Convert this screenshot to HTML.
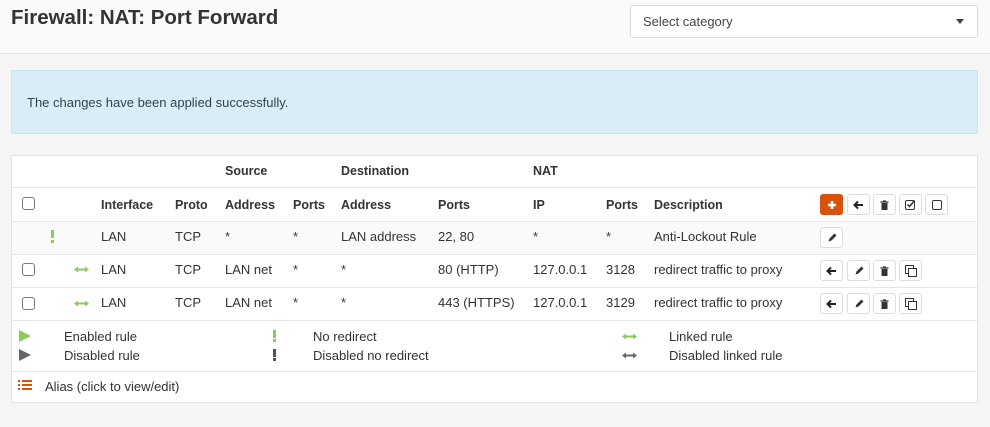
<!DOCTYPE html>
<html><head><meta charset="utf-8"><style>
*{margin:0;padding:0;box-sizing:border-box}
body{width:990px;height:427px;background:#f5f5f5;font-family:"Liberation Sans",sans-serif;font-size:13px;color:#333;position:relative;overflow:hidden}
.a{position:absolute;line-height:16px;white-space:nowrap}
.b{font-weight:bold;font-size:12.5px}
.cb{position:absolute;width:13px;height:13px;border:1px solid #777;border-radius:3px;background:#fff}
.btn{position:absolute;width:23px;height:21px;border:1px solid #ddd;border-radius:3px;background:#fff;display:flex;align-items:center;justify-content:center}
.hl{position:absolute;left:12px;width:966px;height:1px;background:#e6e6e6}
.ex{position:absolute;width:3px}
</style></head><body>
<div style="position:absolute;left:0;top:0;width:990px;height:54px;background:#fafafa;border-bottom:1px solid #e3e3e3"></div>
<div class="a" style="left:11px;top:6px;font-size:20.5px;line-height:24px;font-weight:bold;color:#333">Firewall: NAT: Port Forward</div>
<div style="position:absolute;left:630px;top:5px;width:348px;height:33px;background:#fff;border:1px solid #ddd;border-radius:3px"></div>
<div class="a" style="left:643px;top:14px;color:#444">Select category</div>
<div style="position:absolute;left:956px;top:19px;border-left:4px solid transparent;border-right:4px solid transparent;border-top:5px solid #444"></div>

<div style="position:absolute;left:11px;top:70px;width:967px;height:64px;background:#d9edf7;border:1px solid #bce8f1;border-radius:2px"></div>
<div class="a" style="left:27px;top:95px;color:#31444f">The changes have been applied successfully.</div>

<div style="position:absolute;left:11px;top:155px;width:967px;height:248px;background:#fff;border:1px solid #e3e3e3"></div>
<div style="position:absolute;left:12px;top:221px;width:965px;height:33px;background:#fafafa"></div>
<div class="hl" style="top:187px"></div>
<div class="hl" style="top:221px"></div>
<div class="hl" style="top:254px"></div>
<div class="hl" style="top:287px"></div>
<div class="hl" style="top:320px"></div>
<div class="hl" style="top:371px"></div>

<div class="a b" style="left:225px;top:163px">Source</div>
<div class="a b" style="left:341px;top:163px">Destination</div>
<div class="a b" style="left:533px;top:163px">NAT</div>

<div class="cb" style="left:22px;top:197px"></div>
<div class="a b" style="left:101px;top:197px">Interface</div>
<div class="a b" style="left:175px;top:197px">Proto</div>
<div class="a b" style="left:225px;top:197px">Address</div>
<div class="a b" style="left:293px;top:197px">Ports</div>
<div class="a b" style="left:341px;top:197px">Address</div>
<div class="a b" style="left:438px;top:197px">Ports</div>
<div class="a b" style="left:533px;top:197px">IP</div>
<div class="a b" style="left:606px;top:197px">Ports</div>
<div class="a b" style="left:654px;top:197px">Description</div>

<div class="btn" style="left:820px;top:194px;background:#d9520c;border-color:#d9520c"><svg width="10" height="10"><path d="M5 1v8M1 5h8" stroke="#fff" stroke-width="2.6"/></svg></div>
<div class="btn" style="left:847px;top:194px"><svg width="11" height="10"><path d="M10 5H2M5 1.5L1.5 5 5 8.5" stroke="#222" stroke-width="2" fill="none"/></svg></div>
<div class="btn" style="left:873px;top:194px"><svg width="9" height="10"><path d="M0.5 2h8M3 1h3" stroke="#333" stroke-width="1.3"/><rect x="1.5" y="3" width="6" height="7" fill="#333"/></svg></div>
<div class="btn" style="left:899px;top:194px"><svg width="11" height="11"><rect x="0.5" y="1.5" width="9" height="9" rx="1.5" stroke="#333" fill="none"/><path d="M2.5 5.5l2 2 5-6" stroke="#333" stroke-width="1.5" fill="none"/></svg></div>
<div class="btn" style="left:925px;top:194px"><svg width="10" height="10"><rect x="0.5" y="0.5" width="9" height="9" rx="1.5" stroke="#333" fill="none"/></svg></div>

<svg class="ex" style="left:51px;top:230px" height="13"><rect x="0" y="0" width="3" height="8" fill="#8ccb5a"/><rect x="0" y="10" width="3" height="3" fill="#8ccb5a"/></svg>
<div class="a" style="left:101px;top:229px">LAN</div>
<div class="a" style="left:175px;top:229px">TCP</div>
<div class="a" style="left:225px;top:229px">*</div>
<div class="a" style="left:293px;top:229px">*</div>
<div class="a" style="left:341px;top:229px">LAN address</div>
<div class="a" style="left:438px;top:229px">22, 80</div>
<div class="a" style="left:533px;top:229px">*</div>
<div class="a" style="left:606px;top:229px">*</div>
<div class="a" style="left:654px;top:229px">Anti-Lockout Rule</div>
<div class="btn" style="left:820px;top:227px"><svg width="10" height="10"><path d="M1.5 8.5l1-3 5-5 2 2-5 5z" fill="#333"/></svg></div>

<div class="cb" style="left:22px;top:263px"></div>
<div class="cb" style="left:22px;top:297px"></div>
<svg style="position:absolute;left:74px;top:266px" width="15" height="7"><path d="M2 3.5h11" stroke="#8ccb5a" stroke-width="2"/><path d="M0 3.5L4 0.5v6zM15 3.5L11 0.5v6z" fill="#8ccb5a"/></svg>
<svg style="position:absolute;left:74px;top:300px" width="15" height="7"><path d="M2 3.5h11" stroke="#8ccb5a" stroke-width="2"/><path d="M0 3.5L4 0.5v6zM15 3.5L11 0.5v6z" fill="#8ccb5a"/></svg>
<div class="a" style="left:101px;top:262px">LAN</div><div class="a" style="left:101px;top:295px">LAN</div>
<div class="a" style="left:175px;top:262px">TCP</div><div class="a" style="left:175px;top:295px">TCP</div>
<div class="a" style="left:225px;top:262px">LAN net</div><div class="a" style="left:225px;top:295px">LAN net</div>
<div class="a" style="left:293px;top:262px">*</div><div class="a" style="left:293px;top:295px">*</div>
<div class="a" style="left:341px;top:262px">*</div><div class="a" style="left:341px;top:295px">*</div>
<div class="a" style="left:438px;top:262px">80 (HTTP)</div><div class="a" style="left:438px;top:295px">443 (HTTPS)</div>
<div class="a" style="left:533px;top:262px">127.0.0.1</div><div class="a" style="left:533px;top:295px">127.0.0.1</div>
<div class="a" style="left:606px;top:262px">3128</div><div class="a" style="left:606px;top:295px">3129</div>
<div class="a" style="left:654px;top:262px">redirect traffic to proxy</div><div class="a" style="left:654px;top:295px">redirect traffic to proxy</div>

<div class="btn" style="left:820px;top:260px"><svg width="11" height="10"><path d="M10 5H2M5 1.5L1.5 5 5 8.5" stroke="#222" stroke-width="2" fill="none"/></svg></div>
<div class="btn" style="left:847px;top:260px"><svg width="10" height="10"><path d="M1.5 8.5l1-3 5-5 2 2-5 5z" fill="#333"/></svg></div>
<div class="btn" style="left:873px;top:260px"><svg width="9" height="10"><path d="M0.5 2h8M3 1h3" stroke="#333" stroke-width="1.3"/><rect x="1.5" y="3" width="6" height="7" fill="#333"/></svg></div>
<div class="btn" style="left:899px;top:260px"><svg width="12" height="12"><rect x="0.5" y="0.5" width="8" height="8" stroke="#333" fill="#fff"/><rect x="3.5" y="3.5" width="8" height="8" stroke="#333" fill="#fff"/></svg></div>
<div class="btn" style="left:820px;top:293px"><svg width="11" height="10"><path d="M10 5H2M5 1.5L1.5 5 5 8.5" stroke="#222" stroke-width="2" fill="none"/></svg></div>
<div class="btn" style="left:847px;top:293px"><svg width="10" height="10"><path d="M1.5 8.5l1-3 5-5 2 2-5 5z" fill="#333"/></svg></div>
<div class="btn" style="left:873px;top:293px"><svg width="9" height="10"><path d="M0.5 2h8M3 1h3" stroke="#333" stroke-width="1.3"/><rect x="1.5" y="3" width="6" height="7" fill="#333"/></svg></div>
<div class="btn" style="left:899px;top:293px"><svg width="12" height="12"><rect x="0.5" y="0.5" width="8" height="8" stroke="#333" fill="#fff"/><rect x="3.5" y="3.5" width="8" height="8" stroke="#333" fill="#fff"/></svg></div>

<svg style="position:absolute;left:19px;top:330px" width="12" height="12"><path d="M0 0L12 6 0 12z" fill="#8ccb5a"/></svg>
<svg style="position:absolute;left:19px;top:349px" width="12" height="12"><path d="M0 0L12 6 0 12z" fill="#666"/></svg>
<div class="a" style="left:64px;top:329px">Enabled rule</div>
<div class="a" style="left:64px;top:348px">Disabled rule</div>
<svg class="ex" style="left:273px;top:330px" height="12"><rect x="0" y="0" width="3" height="8" fill="#8ccb5a"/><rect x="0" y="9" width="3" height="3" fill="#8ccb5a"/></svg>
<svg class="ex" style="left:273px;top:349px" height="12"><rect x="0" y="0" width="3" height="8" fill="#555"/><rect x="0" y="9" width="3" height="3" fill="#555"/></svg>
<div class="a" style="left:313px;top:329px">No redirect</div>
<div class="a" style="left:313px;top:348px">Disabled no redirect</div>
<svg style="position:absolute;left:622px;top:333px" width="15" height="7"><path d="M2 3.5h11" stroke="#8ccb5a" stroke-width="2"/><path d="M0 3.5L4 0.5v6zM15 3.5L11 0.5v6z" fill="#8ccb5a"/></svg>
<svg style="position:absolute;left:622px;top:352px" width="15" height="7"><path d="M2 3.5h11" stroke="#666" stroke-width="2"/><path d="M0 3.5L4 0.5v6zM15 3.5L11 0.5v6z" fill="#666"/></svg>
<div class="a" style="left:669px;top:329px">Linked rule</div>
<div class="a" style="left:669px;top:348px">Disabled linked rule</div>

<svg style="position:absolute;left:18px;top:380px" width="14" height="11"><path d="M0 1h2M4 1h10M0 5h2M4 5h10M0 9h2M4 9h10" stroke="#d9520c" stroke-width="2"/></svg>
<div class="a" style="left:45px;top:379px">Alias (click to view/edit)</div>
</body></html>
